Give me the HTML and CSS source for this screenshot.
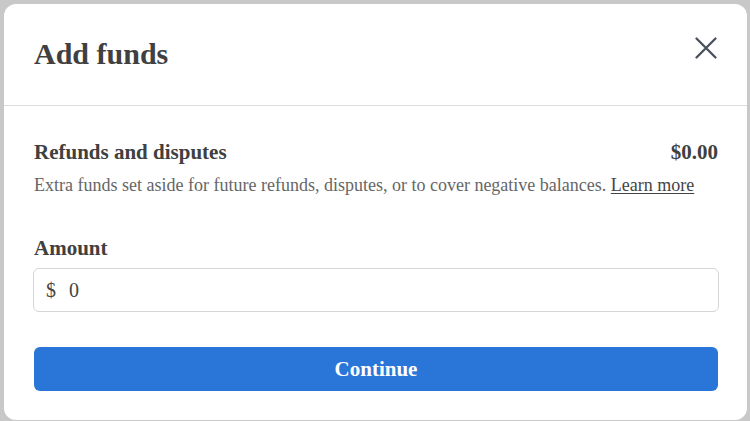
FILE: index.html
```html
<!DOCTYPE html>
<html lang="en">
<head>
  <meta charset="UTF-8">
  <meta name="viewport" content="width=device-width, initial-scale=1.0">
  <title>Add funds</title>
  <link rel="stylesheet" href="styles.css">
</head>
<body>
  <div class="modal">
    <div class="modal-header">
      <h2 class="modal-title">Add funds</h2>
      <button class="close-btn" aria-label="Close">
        <svg viewBox="0 0 32 32" width="32" height="32" fill="none"><path d="M6.5 6.5L25.5 25.5M25.5 6.5L6.5 25.5" stroke="#4b505f" stroke-width="2.3" stroke-linecap="round"/></svg>
      </button>
    </div>
    <div class="modal-body">
      <div class="reserve-row">
        <span class="reserve-label">Refunds and disputes</span>
        <span class="reserve-value">$0.00</span>
      </div>
      <p class="reserve-desc">Extra funds set aside for future refunds, disputes, or to cover negative balances. <a href="#" class="learn-more">Learn more</a></p>
      <div class="field">
        <label class="field-label" for="amount">Amount</label>
        <div class="amount-input">
          <span class="currency">$</span>
          <input type="text" id="amount" value="0">
        </div>
      </div>
      <button class="continue-btn">Continue</button>
    </div>
  </div>
</body>
</html>
```

FILE: styles.css
```css
html, body {
  margin: 0;
  padding: 0;
}
body {
  font-family: 'Liberation Serif', 'Times New Roman', serif;
  background: #c8c8c8;
  padding: 4px 3px 0 4px;
  height: 421px;
  box-sizing: border-box;
  overflow: hidden;
}
.modal {
  background: #fff;
  width: 743px;
  height: 416px;
  border-radius: 12px;
  box-sizing: border-box;
}
.modal-header {
  display: flex;
  justify-content: space-between;
  align-items: flex-start;
  padding: 32px 29px 33px 30px;
  border-bottom: 1px solid #dcdcdc;
}
.modal-title {
  margin: 0;
  font-size: 30px;
  line-height: 36px;
  font-weight: 700;
  color: #404040;
}
.close-btn {
  border: none;
  background: none;
  padding: 0;
  width: 32px;
  height: 32px;
  margin: -4px -4px 0 0;
  cursor: pointer;
}
.close-btn svg {
  display: block;
}
.modal-body {
  padding: 33px 29px 0 30px;
}
.reserve-row {
  display: flex;
  justify-content: space-between;
  font-size: 21px;
  line-height: 26px;
  font-weight: 700;
  color: #404040;
}
.reserve-desc {
  margin: 7px 0 0 0;
  font-size: 18px;
  line-height: 26px;
  color: #666;
}
.learn-more {
  color: #444;
  text-decoration: underline;
  text-underline-offset: 2px;
}
.field {
  margin-top: 37px;
}
.field-label {
  display: block;
  font-size: 21px;
  line-height: 26px;
  font-weight: 700;
  color: #404040;
}
.amount-input {
  display: flex;
  align-items: center;
  height: 44px;
  margin: 7px -1px 0 -1px;
  padding: 0 12px;
  border: 1.5px solid #d6d6d6;
  border-radius: 6px;
  box-sizing: border-box;
  font-size: 20px;
  color: #444;
}
.currency {
  margin-right: 13px;
}
.amount-input input {
  flex: 1;
  border: none;
  outline: none;
  padding: 0;
  font-family: inherit;
  font-size: 20px;
  color: #444;
  background: transparent;
}
.continue-btn {
  display: block;
  width: 100%;
  height: 44px;
  margin-top: 35px;
  border: none;
  border-radius: 6px;
  background: #2a76d8;
  color: #fff;
  font-family: inherit;
  font-size: 21px;
  font-weight: 700;
  cursor: pointer;
}
```
